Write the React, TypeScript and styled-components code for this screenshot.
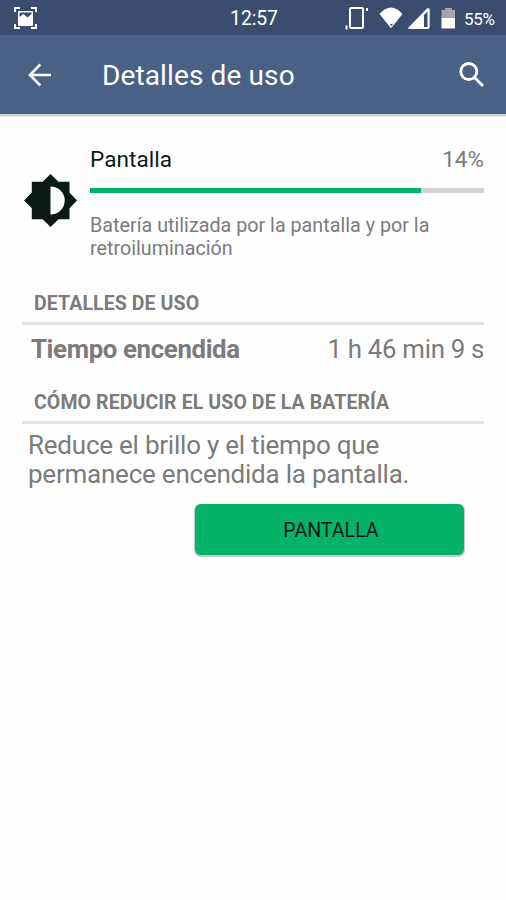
import React from "react";
import styled, { createGlobalStyle } from "styled-components";

const GlobalStyle = createGlobalStyle`
  * { box-sizing: border-box; }
  body { margin: 0; background: #fefefe; font-family: Roboto, sans-serif; }
  p, h1, h2 { margin: 0; font-weight: 400; }
`;

const Screen = styled.div`
  display: flex;
  flex-direction: column;
  width: 506px;
  height: 900px;
  background: #fefefe;
  overflow: hidden;
`;

const StatusBar = styled.header`
  display: grid;
  flex: none;
  grid-template-columns: 1fr auto 1fr;
  align-items: center;
  height: 35px;
  padding: 0 11px 0 13px;
  background: #3b4d6e;
  color: #fff;
`;

const Clock = styled.span`
  font-size: 19.4px;
  line-height: 34px;
  padding-top: 2px;
  letter-spacing: -0.1px;
`;

const StatusIcons = styled.div`
  display: flex;
  align-items: center;
  justify-content: flex-end;
`;

const StatusGlyph = styled.svg<{ $gap?: number }>`
  display: block;
  flex: none;
  margin: 0 ${(p) => p.$gap ?? 0}px 1px 0;
`;

const BatteryLevel = styled.span`
  width: 31px;
  font-size: 17px;
  line-height: 33px;
  letter-spacing: -0.3px;
  padding-top: 2px;
  white-space: nowrap;
`;

const Toolbar = styled.nav`
  display: flex;
  align-items: center;
  flex: none;
  height: 79px;
  padding: 0 21px 0 28px;
  background: #4a6186;
  color: #fff;
  box-shadow: 0 1px 1px 1px #cfcfcf, 0 3px 2px #ececec;
  clip-path: inset(0 0 -8px 0);
`;

const ToolButton = styled.button`
  display: flex;
  padding: 0;
  border: 0;
  background: none;
  color: inherit;
`;

const Title = styled.h1`
  flex: 1;
  margin-left: 51px;
  font-size: 28px;
  line-height: 36px;
  letter-spacing: 0.12px;
  padding-top: 3px;
`;

const Content = styled.main`
  display: flex;
  flex-direction: column;
  padding: 31px 22px 0;
  color: #7b7b7b;
`;

const Summary = styled.section`
  display: grid;
  grid-template-columns: 68px 1fr;
`;

const IconCell = styled.div`
  padding: 29px 0 0 2px;
`;

const SummaryHead = styled.div`
  display: flex;
  justify-content: space-between;
  font-size: 22.5px;
  line-height: 29px;
`;

const ItemName = styled.span`
  color: #0b1a19;
  letter-spacing: 0.08px;
`;

const Track = styled.div`
  height: 5px;
  margin-top: 14px;
  background: #d3d3d3;
`;

const Fill = styled.div`
  height: 5px;
  background: #04b26a;
`;

const Description = styled.p`
  margin-top: 21px;
  font-size: 19.7px;
  line-height: 23px;
  letter-spacing: 0.02px;
  white-space: nowrap;
`;

const SectionTitle = styled.h2<{ $top: number }>`
  height: 33px;
  margin-top: ${(p) => p.$top}px;
  padding-left: 12px;
  border-bottom: 3px solid #e3e3e3;
  font-size: 19.5px;
  font-weight: 700;
  line-height: 23px;
  letter-spacing: 0.1px;
  white-space: nowrap;
`;

const DetailRow = styled.div`
  display: flex;
  justify-content: space-between;
  height: 48px;
  padding-left: 9px;
  font-size: 25.8px;
  line-height: 48px;
  letter-spacing: -0.3px;
`;

const DetailLabel = styled.span`
  font-weight: 700;
  letter-spacing: -0.36px;
`;

const Advice = styled.p`
  margin-top: 7px;
  padding-left: 6px;
  font-size: 26px;
  line-height: 29.3px;
  letter-spacing: -0.23px;
  white-space: nowrap;
`;

const ActionButton = styled.button`
  align-self: flex-end;
  width: 269px;
  height: 51px;
  margin: 14px 20px 0 0;
  padding: 2px 0 0 3px;
  border: 0;
  border-radius: 6px;
  background: #04b26a;
  box-shadow: 0 1px 1px 0.5px #c4c4c4;
  color: #0b1a19;
  font: 400 19.6px Roboto, sans-serif;
`;

const CaptureIcon = () => (
  <StatusGlyph width="25" height="24" viewBox="0 0 25 24" fill="none">
    <path d="M2 6V2h5M18 2h5v4M23 18v4h-5M7 22H2v-4" stroke="#fff" strokeWidth="2" />
    <path fillRule="evenodd" fill="#fff" d="M6 5h13q1 0 1 1v13q0 1-1 1H6q-1 0-1-1V6q0-1 1-1Zm.5 1.500V11l4-3 4 3.500 4-3.500V6.500Z" />
  </StatusGlyph>
);

const RotateIcon = () => (
  <StatusGlyph $gap={10} width="24" height="24" viewBox="0 0 24 24">
    <rect x="5" y="2" width="13" height="20" rx="1" fill="none" stroke="#fff" strokeWidth="2" />
    <path fill="#fff" d="M0.500 19.500h2v4h-2zM21 2h2v3h-2z" />
  </StatusGlyph>
);

const WifiIcon = () => (
  <StatusGlyph $gap={5} width="24" height="24" viewBox="0 0 24 24">
    <path fill="#fff" d="M0.500 8Q12-5 23.500 8L12 22.300Z" />
    <path fill="#3b4d6e" d="M11 18h2.500v1L12 20Z" />
  </StatusGlyph>
);

const SignalIcon = () => (
  <StatusGlyph $gap={11} width="22" height="24" viewBox="0 0 22 24">
    <path fill="#fff" d="M20 2q1.700 0 1.700 2v17q0 2-2 2H2q-3 0-1-2L18.500 3Z" />
    <path fill="#3b4d6e" d="M16 9 19.500 5.500v15.500H16Z" />
  </StatusGlyph>
);

const BatteryIcon = () => (
  <StatusGlyph $gap={8} width="15" height="24" viewBox="0 0 15 24">
    <path fill="#a4a6aa" d="M0.500 4H4V2h7v2h3v8.500H0.500Z" />
    <path fill="#fff" d="M0.500 12H14v10.500H0.500Z" />
  </StatusGlyph>
);

const BackIcon = () => (
  <svg width="23" height="24" viewBox="0 0 23 24" fill="none" stroke="#fff" strokeWidth="2.500">
    <path d="M23 12H2M12.300 1.500 1.900 12 12.300 22.500" />
  </svg>
);

const SearchIcon = () => (
  <svg width="26" height="26" viewBox="0 0 26 26" fill="none" stroke="#fff" strokeWidth="2.800">
    <circle cx="9.800" cy="9.500" r="8" />
    <path d="m15.300 15.300 8.700 8.700" />
  </svg>
);

const BrightnessIcon = () => (
  <svg width="53" height="53" viewBox="0 0 53 53">
    <path fill="#0b1a15" d="M26.500 0 34.500 7.700H45.500V18.500L53 26.500 45.500 34.300V45.300H34.500L26.500 53 18.700 45.300H7.800V34.300L0 26.500 7.800 18.500V7.700H18.700Z" />
    <path fill="#fefefe" d="M26.500 12.500a14.200 14 0 0 1 0 28Z" />
  </svg>
);

const fillPercent = 84;

export default function App() {
  return (
    <Screen>
      <GlobalStyle />
      <StatusBar>
        <CaptureIcon />
        <Clock>12:57</Clock>
        <StatusIcons>
          <RotateIcon />
          <WifiIcon />
          <SignalIcon />
          <BatteryIcon />
          <BatteryLevel>55%</BatteryLevel>
        </StatusIcons>
      </StatusBar>
      <Toolbar>
        <ToolButton aria-label="Atrás"><BackIcon /></ToolButton>
        <Title>Detalles de uso</Title>
        <ToolButton aria-label="Buscar"><SearchIcon /></ToolButton>
      </Toolbar>
      <Content>
        <Summary>
          <IconCell><BrightnessIcon /></IconCell>
          <div>
            <SummaryHead>
              <ItemName>Pantalla</ItemName>
              <span>14%</span>
            </SummaryHead>
            <Track><Fill style={{ width: `${fillPercent}%` }} /></Track>
            <Description>
              Batería utilizada por la pantalla y por la<br />retroiluminación
            </Description>
          </div>
        </Summary>
        <SectionTitle $top={32}>DETALLES DE USO</SectionTitle>
        <DetailRow>
          <DetailLabel>Tiempo encendida</DetailLabel>
          <span>1 h 46 min 9 s</span>
        </DetailRow>
        <SectionTitle $top={18}>CÓMO REDUCIR EL USO DE LA BATERÍA</SectionTitle>
        <Advice>
          Reduce el brillo y el tiempo que<br />permanece encendida la pantalla.
        </Advice>
        <ActionButton>PANTALLA</ActionButton>
      </Content>
    </Screen>
  );
}
